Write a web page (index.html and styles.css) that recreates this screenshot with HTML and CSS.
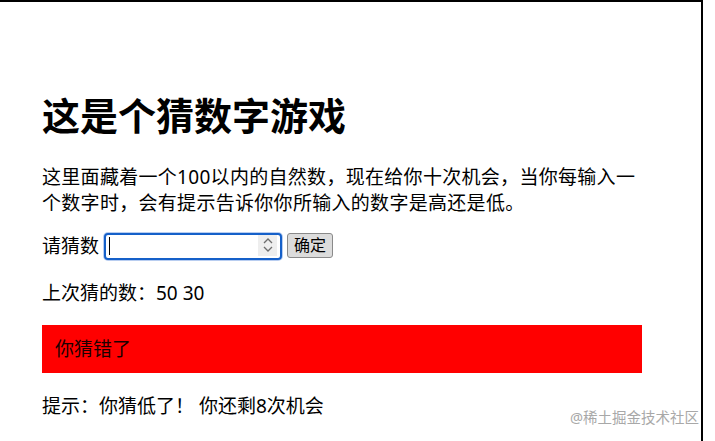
FILE: index.html
```html
<!DOCTYPE html>
<html lang="zh-CN">
<head>
    <meta charset="UTF-8">
    <meta name="viewport" content="width=device-width, initial-scale=1.0">
    <title>猜数字游戏</title>
    <link rel="stylesheet" href="styles.css">
</head>
<body>
    <div class="frame">
        <div class="game">
            <h1>这是个猜数字游戏</h1>
            <p class="intro">这里面藏着一个100以内的自然数，现在给你十次机会，当你每输入一个数字时，会有提示告诉你你所输入的数字是高还是低。</p>

            <div class="guess-row">
                <label for="guessField">请猜数</label>
                <div class="field">
                    <input type="text" id="guessField" class="guess-field">
                    <span class="caret"></span>
                    <span class="spinner">
                        <svg width="12" height="18" viewBox="0 0 12 18">
                            <path d="M2 7 L6 3 L10 7" fill="none" stroke="#6d6d6d" stroke-width="1.3"/>
                            <path d="M2 11 L6 15 L10 11" fill="none" stroke="#6d6d6d" stroke-width="1.3"/>
                        </svg>
                    </span>
                </div>
                <button class="guess-submit">确定</button>
            </div>

            <p class="guesses">上次猜的数：50 30</p>
            <p class="last-result">你猜错了</p>
            <p class="low-or-hi">提示：你猜低了！ 你还剩8次机会</p>
        </div>
        <div class="watermark">@稀土掘金技术社区</div>
    </div>
</body>
</html>
```

FILE: styles.css
```css
body {
    margin: 0;
    font-family: "Noto Sans", "Noto Sans CJK SC", sans-serif;
    color: #000;
    background: #fff;
}
.frame {
    position: relative;
    width: 701px;
    height: 439px;
    border-top: 2px solid #000;
    border-right: 2px solid #000;
    overflow: hidden;
}
.game {
    width: 600px;
    padding-left: 42px;
    padding-top: 85px;
}
h1 {
    margin: 0;
    font-size: 38px;
    line-height: 56px;
    font-weight: bold;
}
.intro {
    margin: 21px 0 0;
    font-size: 19px;
    line-height: 26px;
    letter-spacing: 0.3px;
}
.guess-row {
    display: flex;
    align-items: center;
    margin-top: 15px;
    font-size: 19px;
    height: 28px;
}
.guess-row label {
    margin-right: 5px;
}
.field {
    position: relative;
    width: 178px;
    height: 27px;
}
.guess-field {
    box-sizing: border-box;
    width: 178px;
    height: 27px;
    margin: 0;
    border: 2px solid #1560c9;
    border-radius: 4px;
    box-shadow: 0 0 0 1px #b8cdf0;
    outline: none;
    padding: 0 4px;
    font-size: 16px;
}
.caret {
    position: absolute;
    left: 5px;
    top: 5px;
    width: 1px;
    height: 18px;
    background: #000;
}
.spinner {
    position: absolute;
    right: 5px;
    top: 3px;
    width: 19px;
    height: 21px;
    background: #eeeeee;
    display: flex;
    align-items: center;
    justify-content: center;
}
.guess-submit {
    margin-left: 5px;
    height: 25px;
    padding: 0 6px;
    font-family: inherit;
    font-size: 16px;
    line-height: 1;
    background: #dcdcdc;
    border: 1px solid #8a8a8a;
    border-radius: 3px;
    color: #000;
}
.guesses {
    margin: 21px 0 0;
    font-size: 19px;
    line-height: 26px;
}
.last-result {
    margin: 19px 0 0;
    height: 48px;
    padding-left: 13px;
    background: #ff0000;
    font-size: 19px;
    line-height: 48px;
    color: #1a0000;
}
.low-or-hi {
    margin: 20px 0 0;
    font-size: 19px;
    line-height: 26px;
}
.watermark {
    position: absolute;
    right: 2px;
    top: 404px;
    font-size: 14.5px;
    color: #a8a8a8;
}
```
